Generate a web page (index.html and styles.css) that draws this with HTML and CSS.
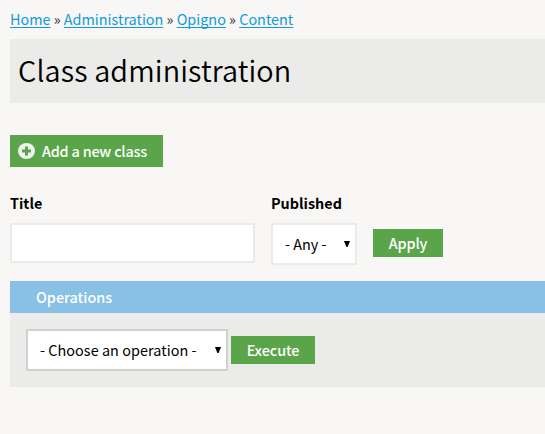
FILE: index.html
```html
<!DOCTYPE html>
<html lang="en">
<head>
<meta charset="utf-8">
<title>Class administration</title>
<link rel="stylesheet" href="styles.css">
</head>
<body>
<nav class="breadcrumb"><a href="#">Home</a> » <a href="#">Administration</a> » <a href="#">Opigno</a> » <a href="#">Content</a></nav>
<h1 class="page-title">Class administration</h1>
<a class="add-button" href="#">
  <svg class="add-icon" viewBox="0 0 17 16"><ellipse cx="8.5" cy="8" rx="8.5" ry="8" fill="#f0f0ee"/><path d="M8.5 3.5v9M4 8h9" stroke="#5aa54a" stroke-width="3"/></svg>
  <span>Add a new class</span>
</a>
<form class="filters">
  <div class="field">
    <label class="label" for="title">Title</label>
    <input class="text-input" id="title" type="text">
  </div>
  <div class="field">
    <label class="label label-published" for="published">Published</label>
    <div class="select-box">
      <select class="select select-published" id="published"><option>- Any -</option></select>
      <svg class="arrow" viewBox="0 0 6 6"><path d="M0 0h6L3.6 6H2.4z"/></svg>
    </div>
  </div>
  <button class="button apply" type="button">Apply</button>
</form>
<section class="operations">
  <h2 class="operations-title">Operations</h2>
  <div class="operations-body">
    <div class="select-box">
      <select class="select select-operation" aria-label="Operation"><option>- Choose an operation -</option></select>
      <svg class="arrow" viewBox="0 0 6 6"><path d="M0 0h6L3.6 6H2.4z"/></svg>
    </div>
    <button class="button execute" type="button">Execute</button>
  </div>
</section>
</body>
</html>
```
FILE: styles.css
```css
* { box-sizing: border-box; }
body {
  margin: 0;
  padding: 9px 0 0 10px;
  background: #f8f7f5;
  color: #000;
  font: 14.4px/20px "Noto Sans CJK SC", sans-serif;
  overflow: hidden;
}
.breadcrumb { height: 30px; white-space: nowrap; color: #333; }
.breadcrumb a { color: #0f9bdc; text-decoration-thickness: 1px; text-underline-offset: 2px; text-decoration-skip-ink: none; }
.page-title {
  height: 64px;
  margin: 0 0 32px;
  padding-left: 8px;
  background: #ebebe9;
  font-size: 28.8px;
  font-weight: 350;
  letter-spacing: 0.12px;
  line-height: 62px;
  white-space: nowrap;
}
.add-button {
  display: flex;
  align-items: center;
  gap: 7px;
  width: 153px;
  height: 32px;
  padding-left: 8px;
  background: #5aa54a;
  color: #fff;
  letter-spacing: -0.2px;
  font-weight: 500;
  text-decoration: none;
  white-space: nowrap;
}
.add-icon { width: 17px; height: 16px; flex: none; }
.filters { display: flex; align-items: flex-start; gap: 16px; height: 88px; margin: 26px 0 0; }
.label { display: block; height: 30px; line-height: 20px; font-weight: 700; }
.text-input { display: block; width: 245px; height: 40px; border: 2px solid #ebebe9; background: #fff; }
.select-box { position: relative; display: flex; }
.select {
  appearance: none;
  height: 42px;
  padding: 0 12px;
  border: 2px solid #ebebe9;
  border-radius: 0;
  background: #fff;
  color: #000;
  font: inherit;
}
.select-published { width: 86px; }
.select-operation { width: 202px; border-color: #d0d0ce; letter-spacing: 0.05px; }
.arrow { position: absolute; right: 7px; top: 18px; width: 6px; height: 6px; }
.button { height: 28px; padding: 0; border: 0; background: #5aa54a; color: #fff; font: inherit; font-weight: 500; letter-spacing: -0.1px; line-height: 28px; }
.apply { width: 70px; margin-top: 36px; }
.operations-title {
  height: 32px;
  margin: 0;
  padding-left: 26px;
  background: #88c0e6;
  color: #fff;
  font-size: inherit;
  font-weight: 500;
  line-height: 32px;
}
.operations-body { display: flex; gap: 3px; height: 74px; padding: 16px; background: #ebebe9; }
.execute { width: 84px; margin-top: 7px; }
```
